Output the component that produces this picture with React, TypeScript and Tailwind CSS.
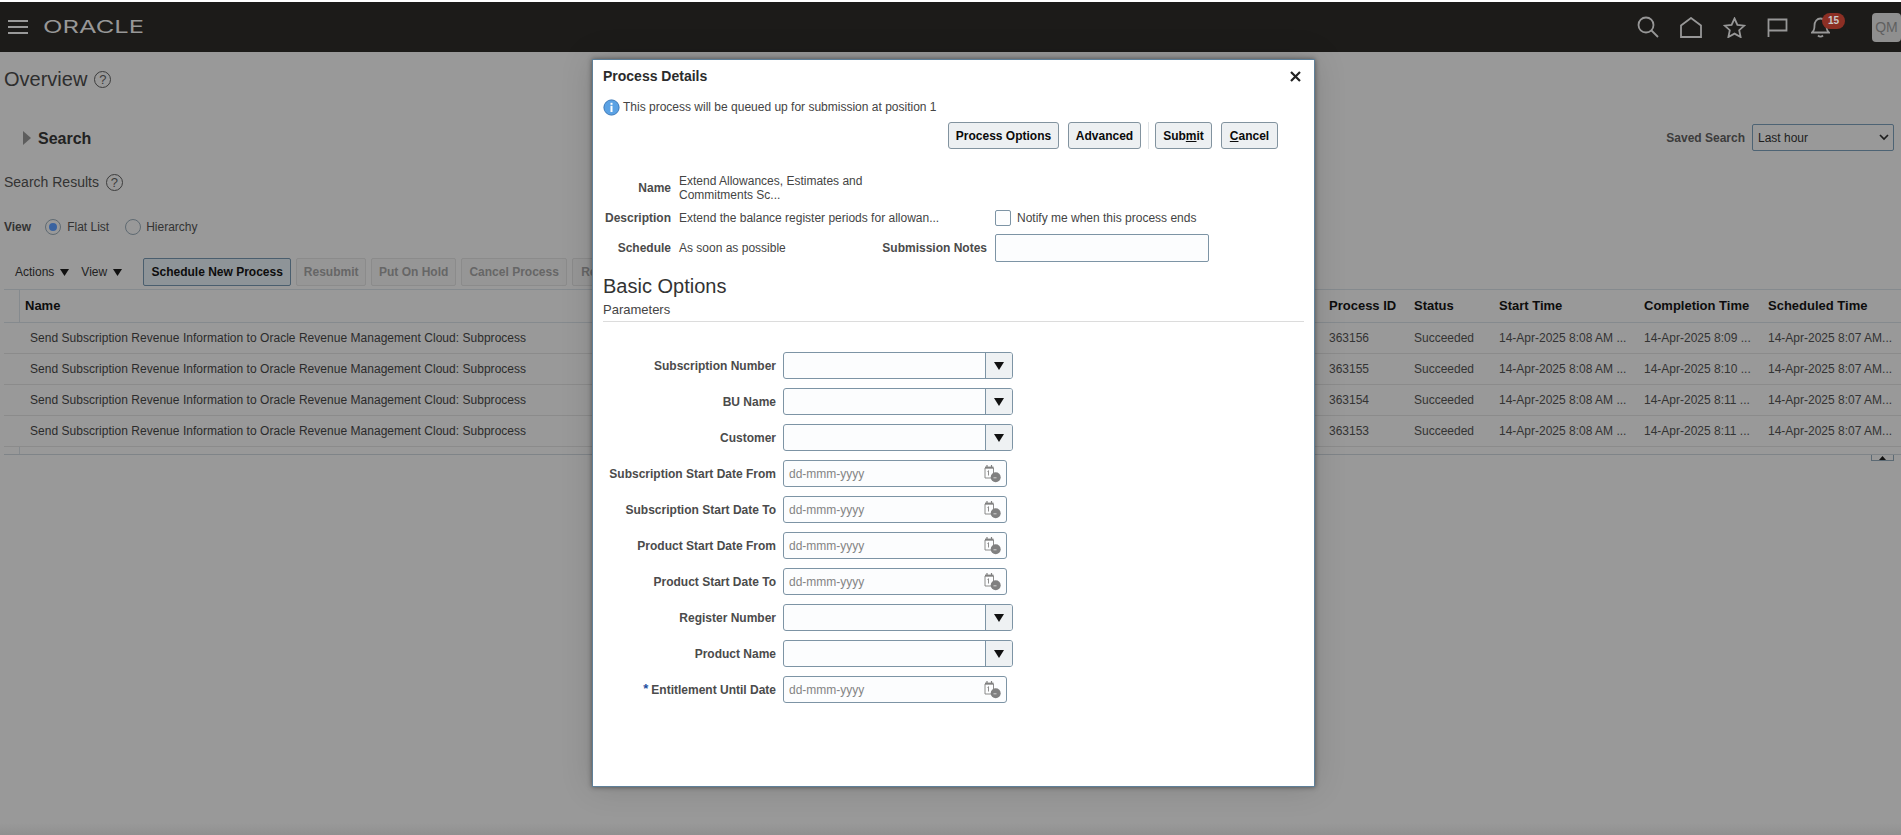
import React from "react";

const F = "font-['Liberation_Sans',Arial,sans-serif]";

function HelpIcon() {
  return (
    <span className="ml-[7px] flex h-[17px] w-[17px] items-center justify-center rounded-full border border-[#3c3c3c] text-[13px] leading-none text-[#3c3c3c]">?</span>
  );
}

function Caret({ className = "" }: { className?: string }) {
  return (
    <svg width="9" height="7" viewBox="0 0 9 7" className={className}>
      <path d="M0 0h9L4.5 7z" fill="#111" />
    </svg>
  );
}

function TopIcons() {
  const s = { fill: "none", stroke: "#979797", strokeWidth: 1.8 } as const;
  return (
    <div className="ml-auto flex h-full items-center">
      <svg width="22" height="22" viewBox="0 0 22 22" className="mr-[21px]" {...s}>
        <circle cx="9" cy="9" r="7.5" />
        <path d="M14.5 14.5L21 21" />
      </svg>
      <svg width="22" height="21" viewBox="0 0 22 21" className="mr-[21px]" {...s}>
        <path d="M1 20V8.5L11 1l10 7.5V20z" />
      </svg>
      <svg width="23" height="21" viewBox="0 0 23 21" className="mr-[21px]" {...s}>
        <path d="M11.5 1.5l2.9 6.3 6.9.8-5.1 4.6 1.4 6.8-6.1-3.4-6.1 3.4 1.4-6.8L1.7 8.6l6.9-.8z" />
      </svg>
      <svg width="21" height="19" viewBox="0 0 21 19" className="mr-[23px]" {...s}>
        <path d="M1.5 19V1.5h18v11H1.5" />
      </svg>
      <div className="relative mr-[42px] h-[21px] w-[19px]">
        <svg width="19" height="21" viewBox="0 0 19 21" {...s}>
          <path d="M1 15.5c2-1.5 2.5-3.5 2.5-7C3.500 4.500 6 1.500 9.500 1.500s6 3 6 7c0 3.500.5 5.500 2.500 7z" />
          <path d="M7 18.500c1.500 1.500 3.500 1.500 5 0" />
        </svg>
        <span className="absolute left-[11px] top-[-4px] flex h-[16px] w-[23px] items-center justify-center rounded-full bg-[#8c2f24] text-[10px] font-bold leading-none text-[#c9c9c9]">15</span>
      </div>
      <div className="mr-0 flex h-[29px] w-[29px] items-center justify-center rounded-[4px] bg-[#8f8f8f] text-[14px] text-[#5f5f5f]">QM</div>
    </div>
  );
}

function DisabledBtn({ children, w }: { children: React.ReactNode; w: string }) {
  return (
    <div className={`flex h-[28px] shrink-0 items-center justify-center rounded-[2px] border border-[#8b8b8b] bg-[#969696] text-[12px] font-bold text-[#666666] ${w}`}>{children}</div>
  );
}

const rows = [
  ["363156", "14-Apr-2025 8:09 ..."],
  ["363155", "14-Apr-2025 8:10 ..."],
  ["363154", "14-Apr-2025 8:11 ..."],
  ["363153", "14-Apr-2025 8:11 ..."],
];

function Table() {
  return (
    <div className="ml-[4px] mt-[3px] border-t border-[#858a8e] text-[12px]">
      <div className="flex h-[33px] items-center border-b border-[#858a8e] text-[13px] font-bold text-[#0d0d0d]">
        <div className="h-full w-[16px] shrink-0 border-r border-[#858a8e]" />
        <div className="w-[1309px] shrink-0 pl-[5px]">Name</div>
        <div className="w-[85px] shrink-0">Process ID</div>
        <div className="w-[85px] shrink-0">Status</div>
        <div className="w-[145px] shrink-0">Start Time</div>
        <div className="w-[124px] shrink-0">Completion Time</div>
        <div className="shrink-0">Scheduled Time</div>
      </div>
      {rows.map(([id, done]) => (
        <div key={id} className="flex h-[31px] items-center border-b border-[#8b8b8b] text-[#2b2b2b]">
          <div className="h-full w-[16px] shrink-0" />
          <div className="w-[1309px] shrink-0 whitespace-nowrap pl-[10px] tracking-[0.03px]">Send Subscription Revenue Information to Oracle Revenue Management Cloud: Subprocess</div>
          <div className="w-[85px] shrink-0 text-[#333]">{id}</div>
          <div className="w-[85px] shrink-0 text-[#333]">Succeeded</div>
          <div className="w-[145px] shrink-0 whitespace-nowrap text-[#333]">14-Apr-2025 8:08 AM ...</div>
          <div className="w-[124px] shrink-0 whitespace-nowrap text-[#333]">{done}</div>
          <div className="shrink-0 whitespace-nowrap text-[#333]">14-Apr-2025 8:07 AM...</div>
        </div>
      ))}
      <div className="flex h-[8px] border-b border-[#7f8488]">
        <div className="h-full w-[16px] shrink-0 border-r border-[#858a8e]" />
      </div>
      <div className="ml-[1867px] flex h-[6px] w-[23px] items-center justify-center border-x border-b border-[#5c6a74]">
        <svg width="7" height="4" viewBox="0 0 7 4"><path d="M3.500 0L7 4H0z" fill="#111" /></svg>
      </div>
    </div>
  );
}

function Background() {
  return (
    <div className="flex h-[783px] flex-col bg-[#999999] text-[#2e2e2e]">
      <div className="ml-[4px] mt-[16px] flex h-[22px] items-center text-[20px] leading-none">Overview<HelpIcon /></div>
      <div className="mt-[36px] flex h-[23px] items-center justify-between pr-[7px]">
        <div className="ml-[23px] flex items-center">
          <svg width="8" height="14" viewBox="0 0 8 14" className="mr-[7px]"><path d="M0 0l8 7-8 7z" fill="#5d5d5d" /></svg>
          <span className="mt-[3px] text-[16px] font-bold leading-none text-[#222]">Search</span>
        </div>
        <div className="flex items-center">
          <span className="mr-[7px] text-[12px] font-bold text-[#3c3c3c]">Saved Search</span>
          <div className="flex h-[27px] w-[142px] items-center justify-between rounded-[2px] border border-[#4d6374] pl-[5px] pr-[4px] text-[12px] text-[#1d1d1d]">
            Last hour
            <svg width="10" height="7" viewBox="0 0 10 7" fill="none" stroke="#1d1d1d" strokeWidth="1.700"><path d="M1 1l4 4 4-4" /></svg>
          </div>
        </div>
      </div>
      <div className="ml-[4px] mt-[23px] flex h-[20px] items-center text-[14px] leading-none text-[#333]">Search Results<HelpIcon /></div>
      <div className="ml-[4px] mt-[26px] flex h-[18px] items-center text-[12px]">
        <span className="mr-[14px] font-bold text-[#333]">View</span>
        <span className="mr-[6px] flex h-[16px] w-[16px] items-center justify-center rounded-full border border-[#5f6a72]"><span className="h-[8px] w-[8px] rounded-full bg-[#3a63a0]" /></span>
        <span className="mr-[16px] text-[#333]">Flat List</span>
        <span className="mr-[5px] h-[16px] w-[16px] rounded-full border border-[#5f6a72]" />
        <span className="text-[#333]">Hierarchy</span>
      </div>
      <div className="ml-[15px] mt-[22px] flex h-[28px] items-center text-[12px]">
        <span className="text-[#222]">Actions</span>
        <Caret className="ml-[6px] mr-[12px]" />
        <span className="text-[#222]">View</span>
        <Caret className="ml-[6px] mr-[21px]" />
        <div className="mr-[5px] flex h-[28px] w-[148px] shrink-0 items-center justify-center rounded-[2px] border border-[#4a5e6e] bg-[#8e9498] text-[12px] font-bold text-[#0d0d0d]">Schedule New Process</div>
        <DisabledBtn w="w-[70px] mr-[5px]">Resubmit</DisabledBtn>
        <DisabledBtn w="w-[85px] mr-[5px]">Put On Hold</DisabledBtn>
        <DisabledBtn w="w-[106px] mr-[5px]">Cancel Process</DisabledBtn>
        <DisabledBtn w="w-[40px] !justify-start pl-[8px]">Re</DisabledBtn>
      </div>
      <Table />
      <div className="mt-auto h-[12px] bg-gradient-to-b from-[#999999] to-[#909090]" />
    </div>
  );
}

function CalIcon() {
  return (
    <svg width="17" height="19" viewBox="0 0 17 19" fill="none">
      <path d="M1 4h8.500v10H1z" stroke="#808080" strokeWidth="0.900" />
      <path d="M1 3.500h8.500" stroke="#808080" strokeWidth="1.800" />
      <path d="M3 1v3M7.500 1v3" stroke="#808080" strokeWidth="1.200" />
      <path d="M3.500 7.500l1-.8v4.800" stroke="#808080" strokeWidth="0.900" />
      <circle cx="11.700" cy="13.300" r="5" fill="#808080" />
      <path d="M9.500 13.800h3" stroke="#ddd" strokeWidth="0.900" />
    </svg>
  );
}

function Label({ children, req }: { children: React.ReactNode; req?: boolean }) {
  return (
    <div className="flex w-[174px] shrink-0 items-center justify-end pr-[1px] text-[12px] font-bold text-[#4b4b4b]">
      {req && <span className="mr-[3px] mb-[3px] text-[13px] leading-none text-[#1e4fa0]">*</span>}
      {children}
    </div>
  );
}

function ComboRow({ label }: { label: string }) {
  return (
    <div className="flex h-[27px] items-center">
      <Label>{label}</Label>
      <div className="ml-[6px] flex h-[27px] w-[230px] overflow-hidden rounded-[3px] border border-[#7d94a5] bg-[#fcfdfe]">
        <div className="flex-1" />
        <div className="flex w-[27px] items-center justify-center border-l border-[#7d94a5] bg-[#eef1f3]">
          <svg width="10" height="8" viewBox="0 0 10 8"><path d="M0 0h10L5 8z" fill="#111" /></svg>
        </div>
      </div>
    </div>
  );
}

function DateRow({ label, req }: { label: string; req?: boolean }) {
  return (
    <div className="flex h-[27px] items-center">
      <Label req={req}>{label}</Label>
      <div className="ml-[6px] flex h-[27px] w-[224px] items-center justify-between rounded-[3px] border border-[#7d94a5] bg-[#fcfdfe] pl-[5px] pr-[5px] text-[12px] text-[#848484]">
        dd-mmm-yyyy
        <CalIcon />
      </div>
    </div>
  );
}

function ModalBtn({ children, w }: { children: React.ReactNode; w: string }) {
  return (
    <div className={`flex h-[27px] shrink-0 items-center justify-center rounded-[3px] border border-[#82939f] bg-[#edf0f2] text-[12px] font-bold text-[#0a0a0a] ${w}`}>{children}</div>
  );
}

function Modal() {
  return (
    <div className="absolute left-[592px] top-[59px] flex h-[728px] w-[723px] flex-col border border-[#5f8099] bg-white pl-[10px] pr-[10px] text-[#333] shadow-[0_0_5px_rgba(0,0,0,0.45),0_0_30px_rgba(0,0,0,0.15)]">
      <div className="mt-[7px] flex h-[18px] items-center justify-between">
        <span className="text-[14px] font-bold text-[#2b2b2b]">Process Details</span>
        <svg width="11" height="11" viewBox="0 0 11 11" className="mr-[3px]" stroke="#222" strokeWidth="2.200"><path d="M1 1l9 9M10 1l-9 9" /></svg>
      </div>
      <div className="mt-[13px] flex h-[18px] items-center text-[12px] text-[#444]">
        <svg width="17" height="17" viewBox="0 0 17 17" className="mr-[3px]">
          <circle cx="8.500" cy="8.500" r="7.600" fill="#5ba2e4" stroke="#3b78b8" />
          <rect x="7.500" y="6.800" width="2" height="6.200" fill="#fff" />
          <rect x="7.500" y="3.800" width="2" height="2" fill="#fff" />
        </svg>
        This process will be queued up for submission at position 1
      </div>
      <div className="mt-[6px] flex h-[27px] items-center pl-[345px]">
        <ModalBtn w="w-[111px]">Process Options</ModalBtn>
        <ModalBtn w="w-[73px] ml-[9px]">Advanced</ModalBtn>
        <div className="ml-[7px] mr-[6px] h-[27px] w-px bg-[#dfe3e6]" />
        <ModalBtn w="w-[57px]"><span>Sub<span className="underline">m</span>it</span></ModalBtn>
        <ModalBtn w="w-[57px] ml-[9px]"><span><span className="underline">C</span>ancel</span></ModalBtn>
      </div>
      <div className="mt-[25px] flex text-[12px] leading-[14px]">
        <div className="w-[68px] shrink-0 self-center text-right font-bold text-[#4b4b4b]">Name</div>
        <div className="ml-[8px] w-[230px] text-[#444]">Extend Allowances, Estimates and<br />Commitments Sc...</div>
      </div>
      <div className="mt-[8px] flex h-[16px] items-center text-[12px]">
        <div className="w-[68px] shrink-0 text-right font-bold text-[#4b4b4b]">Description</div>
        <div className="ml-[8px] w-[316px] shrink-0 whitespace-nowrap text-[#444]">Extend the balance register periods for allowan...</div>
        <div className="h-[16px] w-[16px] shrink-0 rounded-[2px] border border-[#7d94a5] bg-[#fcfdfe]" />
        <div className="ml-[6px] text-[#444]">Notify me when this process ends</div>
      </div>
      <div className="mt-[8px] flex h-[28px] items-center text-[12px]">
        <div className="w-[68px] shrink-0 text-right font-bold text-[#4b4b4b]">Schedule</div>
        <div className="ml-[8px] w-[195px] shrink-0 text-[#444]">As soon as possible</div>
        <div className="w-[113px] shrink-0 text-right font-bold text-[#4b4b4b]">Submission Notes</div>
        <div className="ml-[8px] h-[28px] w-[214px] rounded-[2px] border border-[#7d94a5] bg-[#fcfdfe]" />
      </div>
      <div className="mt-[11px] flex h-[26px] items-center text-[20px] leading-none text-[#333]">Basic Options</div>
      <div className="mt-[3px] flex h-[16px] items-center text-[13px] text-[#444]">Parameters</div>
      <div className="mt-[3px] h-px bg-[#dcdcdc]" />
      <div className="mt-[30px] flex flex-col gap-[9px]">
        <ComboRow label="Subscription Number" />
        <ComboRow label="BU Name" />
        <ComboRow label="Customer" />
        <DateRow label="Subscription Start Date From" />
        <DateRow label="Subscription Start Date To" />
        <DateRow label="Product Start Date From" />
        <DateRow label="Product Start Date To" />
        <ComboRow label="Register Number" />
        <ComboRow label="Product Name" />
        <DateRow label="Entitlement Until Date" req />
      </div>
    </div>
  );
}

export default function App() {
  return (
    <div className={`relative h-[835px] w-[1901px] overflow-hidden bg-white ${F}`}>
      <div className="mt-[2px] flex h-[50px] items-center bg-[#1c1b19]">
        <div className="ml-[8px] flex w-[20px] flex-col gap-[4px]">
          <span className="h-[2px] bg-[#999]" />
          <span className="h-[2px] bg-[#999]" />
          <span className="h-[2px] bg-[#999]" />
        </div>
        <span className="ml-[15px] origin-left scale-x-[1.5] font-['Inter',sans-serif] text-[17px] font-normal leading-none text-[#979797]">ORACLE</span>
        <TopIcons />
      </div>
      <Background />
      <Modal />
    </div>
  );
}
